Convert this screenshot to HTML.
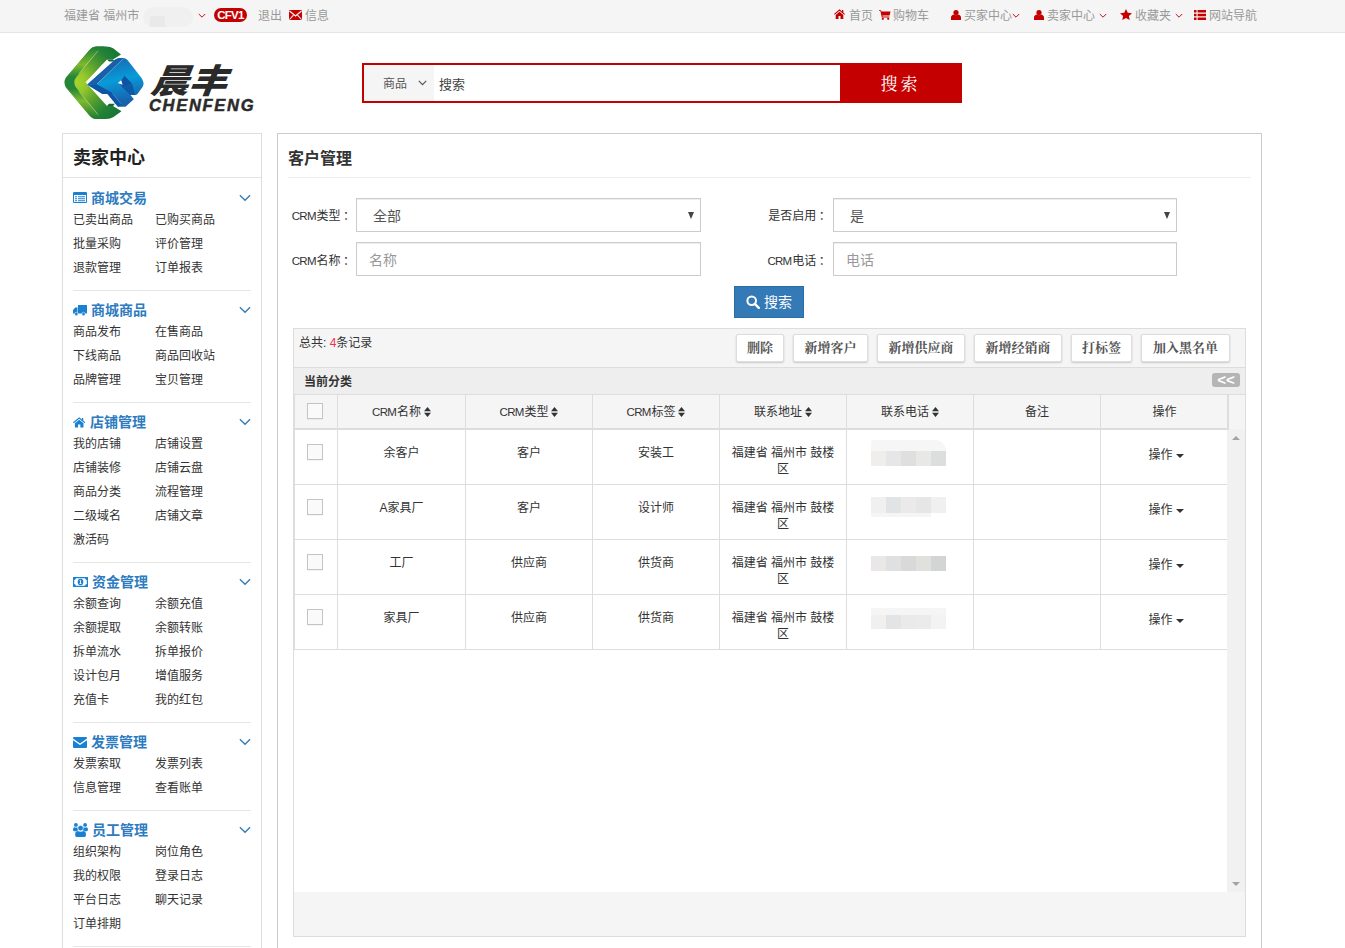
<!DOCTYPE html>
<html lang="zh-CN">
<head>
<meta charset="utf-8">
<title>客户管理</title>
<style>
*{box-sizing:border-box;margin:0;padding:0}
html,body{width:1345px;height:948px;overflow:hidden;background:#fff}
body{font-family:"Liberation Sans","Noto Sans CJK SC",sans-serif;font-size:12px;color:#333;position:relative}
a{color:inherit;text-decoration:none}
ul{list-style:none}
/* top bar */
#topbar{position:absolute;left:0;top:0;width:1345px;height:33px;background:#f5f5f5;border-bottom:1px solid #e5e5e5;color:#999;font-size:12px;line-height:32px}
#topbar .t{position:absolute;top:0;white-space:nowrap}
#topbar svg{position:absolute}
.badge{position:absolute;left:214px;top:8px;width:33px;height:14px;border-radius:7px;background:#c40000;color:#fff;font-size:11.5px;font-weight:bold;line-height:14.5px;text-align:center;letter-spacing:-0.7px}
.blur1{position:absolute;left:143px;top:7px;width:50px;height:20px;border-radius:10px;background:#f0f0f0}
.blur1:after{content:'';position:absolute;left:7px;top:9px;width:15px;height:11px;background:#e9e9e9}
/* logo */
#logo{position:absolute;left:62px;top:44px;width:195px;height:78px}
/* search */
#search{position:absolute;left:362px;top:63px;width:600px;height:40px;border:2px solid #c40000;background:#fff}
#search .cat{position:absolute;left:0;top:0;width:70px;height:36px;background:#f5f5f5;color:#555;font-size:12px;line-height:39px;padding-left:19px}
#search .kw{position:absolute;left:75px;top:0;line-height:40px;font-size:13px;color:#444}
#search .btn{position:absolute;left:476px;top:-2px;width:122px;height:40px;background:#c40000;color:#fff;font-size:17px;line-height:44px;text-align:center;letter-spacing:3px;padding-right:1px;font-family:"Liberation Serif","Noto Serif CJK SC",serif}
/* sidebar */
#side{position:absolute;left:62px;top:133px;width:200px;height:830px;border:1px solid #ddd;background:#fff}
#side h2{height:44px;line-height:49px;padding-left:10px;font-size:18px;font-weight:bold;color:#222;border-bottom:1px solid #e4e4e4}
.sec{position:relative;margin:0 10px;border-top:1px solid #e7e7e7;padding-top:8px;padding-bottom:10px}
.sec.first{border-top:0;padding-top:9px;margin-top:0}
.sec h3{height:21px;line-height:23px;font-size:14px;font-weight:bold;color:#2d7bc0;padding-left:19px;position:relative}
.sec h3 svg.ic{position:absolute;left:0;top:5px}
.sec h3 svg.chev{position:absolute;right:0;top:7px}
.sec ul{display:block;overflow:hidden}
.sec li{float:left;width:82px;height:24px;line-height:24px;font-size:12px;color:#333;white-space:nowrap}
/* main */
#main{position:absolute;left:277px;top:133px;width:985px;height:830px;border:1px solid #ccc;background:#fff}
#main h1{position:absolute;left:10px;top:10px;width:963px;height:34px;line-height:30px;font-size:16px;font-weight:bold;color:#333;border-bottom:1px solid #eee}
.lbl{position:absolute;font-size:12px;color:#333;line-height:34px;text-align:right;white-space:nowrap}
.la{font-size:11.5px;letter-spacing:-0.7px;margin-right:0.7px}
.co{font-style:normal;margin-left:2.5px}
.fld{position:absolute;width:345px;height:34px;border:1px solid #ccc;background:#fff;font-size:14px;line-height:32px;padding-top:1px;color:#555;box-shadow:inset 0 1px 1px rgba(0,0,0,.075)}
.fld.ph{color:#999;padding-left:12px}
.fld.sel{padding-left:16px}
.fld .arr{position:absolute;right:6px;top:13px;width:0;height:0;border-left:3.5px solid transparent;border-right:3.5px solid transparent;border-top:7px solid #444}
#sbtn{position:absolute;left:456px;top:152px;width:70px;height:32px;background:#337ab7;border:1px solid #2e6da4;color:#fff;font-size:14px;line-height:30px;white-space:nowrap}
#sbtn svg{position:absolute;left:11px;top:8px}
#sbtn span{position:absolute;left:29px;top:0}
/* grid */
#grid{position:absolute;left:15px;top:194px;width:953px;height:609px;border:1px solid #ddd;background:#f5f5f5}
#tb{position:absolute;left:0;top:0;width:951px;height:39px;border-bottom:1px solid #ddd}
#tb .tot{position:absolute;left:5px;top:5px;line-height:18px;font-size:12px;color:#333}
#tb .tot b{color:#f4304a;font-weight:normal}
.gb{position:absolute;top:5px;height:28px;border:1px solid #ddd;border-radius:2px;background:#fff;color:#555;font-size:13px;font-weight:bold;line-height:26px;text-align:center;font-family:"Liberation Serif","Noto Serif CJK SC",serif;white-space:nowrap;box-shadow:0 1px 2px rgba(0,0,0,.18)}
#cat{position:absolute;left:0;top:39px;width:951px;height:27px;background:#eee;font-weight:bold;font-size:12px;line-height:28px;padding-left:10px;color:#333}
#cat .cl{position:absolute;left:918px;top:5px;width:28px;height:14px;border-radius:3px;background:#b5b5b5;color:#fff;font-size:15px;line-height:13px;text-align:center;font-weight:bold;letter-spacing:0}
table{border-collapse:collapse;table-layout:fixed;position:absolute;left:0}
td,th{border:1px solid #ddd;text-align:center;font-weight:normal;font-size:12px;color:#333;vertical-align:top}
#hd{top:65px;width:934px}
#hd th{height:35px;line-height:34px;background:#f5f5f5;border-bottom:2px solid #ddd;vertical-align:middle}
#bodywrap{position:absolute;left:0;top:101px;width:933px;height:462px;background:#fff;overflow:hidden}
#bd{top:-1px;width:934px}
#bd td{height:55px;padding:15px 8px 0;line-height:16px}
.cb{display:inline-block;width:16px;height:16px;border:1px solid #c4c4c4;background:#fafafa;border-radius:0;box-shadow:0 1px 1px rgba(0,0,0,.04);vertical-align:top}
th .cb{margin-top:8px;margin-left:-3px;background:#fafafa}
td .cb{margin-top:-1px;margin-left:-3px}
.sort{display:inline-block;vertical-align:middle;margin-left:3px;margin-top:-2px}
.op{display:inline-block;padding-top:2px;padding-left:3px}
.car{display:inline-block;width:0;height:0;border-left:4px solid transparent;border-right:4px solid transparent;border-top:4px solid #333;margin-left:3px;vertical-align:middle}
.pc{position:relative}
.bl{position:absolute;left:24px;width:75px;display:block}
.ph1{display:inline-block;width:75px;height:24px;margin-top:-8px;background:linear-gradient(90deg,#efeeee 0 20%,#e6e6e8 20% 40%,#e0e0e0 40% 60%,#e8e8e6 60% 80%,#dedfdf 80%)}
#sb{position:absolute;left:933px;top:100px;width:18px;height:463px;background:#f1f1f1}
#sb i{position:absolute;left:5px;width:0;height:0;border-left:4px solid transparent;border-right:4px solid transparent}
#sb i.up{top:7px;border-bottom:4px solid #a3a3a3}
#sb i.dn{bottom:6px;border-top:4px solid #a3a3a3}
#hdsb{position:absolute;left:934px;top:66px;width:17px;height:35px;background:#f5f5f5}
</style>
</head>
<body>
<div id="topbar">
<span class="t" style="left:64px">福建省 福州市</span>
<span class="blur1"></span>
<svg style="left:198px;top:13px" width="8" height="6" viewBox="0 0 8 6"><path d="M0.8 1 L4 4.2 L7.2 1" fill="none" stroke="#c40000" stroke-width="0.95"/></svg>
<span class="badge">CFV1</span>
<span class="t" style="left:258px">退出</span>
<svg style="left:289px;top:10px" width="13" height="10" viewBox="0 0 13 10"><rect x="0" y="0" width="13" height="10" rx="1" fill="#c40000"/><path d="M0.5 1 L6.5 6 L12.5 1" fill="none" stroke="#f5f5f5" stroke-width="1.3"/><path d="M0.5 9.5 L4.5 5.2 M12.5 9.5 L8.5 5.2" fill="none" stroke="#f5f5f5" stroke-width="1.1"/></svg>
<span class="t" style="left:305px">信息</span>
<svg style="left:834px;top:9px" width="11" height="10" viewBox="0 0 11 10"><path d="M5.5 0.2 L0 5 L0.7 5.8 L5.5 1.8 L10.3 5.8 L11 5 L9.3 3.5 V1 H8 V2.4 Z" fill="#c40000"/><path d="M5.5 2.8 L1.7 6 V10 H4.5 V7 H6.5 V10 H9.3 V6 Z" fill="#c40000"/></svg>
<span class="t" style="left:849px">首页</span>
<svg style="left:879px;top:10px" width="12" height="10" viewBox="0 0 12 10"><path d="M0 0.3 H2 L2.4 1.4 H11.5 L10.6 5.6 H3.4 L3.6 6.6 H10.4 V7.4 H2.8 L1.4 1.1 H0 Z" fill="#c40000"/><circle cx="3.8" cy="8.8" r="1.1" fill="#c40000"/><circle cx="9.2" cy="8.8" r="1.1" fill="#c40000"/></svg>
<span class="t" style="left:893px">购物车</span>
<svg style="left:951px;top:10px" width="10" height="10" viewBox="0 0 10 10"><circle cx="5" cy="2.6" r="2.6" fill="#c40000"/><path d="M0 10 V7.5 C0 5.5 1.5 4.6 3 4.4 C4 5.4 6 5.4 7 4.4 C8.5 4.6 10 5.5 10 7.5 V10 Z" fill="#c40000"/></svg>
<span class="t" style="left:964px">买家中心</span>
<svg style="left:1012px;top:13px" width="8" height="6" viewBox="0 0 8 6"><path d="M0.8 1 L4 4.2 L7.2 1" fill="none" stroke="#c40000" stroke-width="0.95"/></svg>
<svg style="left:1034px;top:10px" width="10" height="10" viewBox="0 0 10 10"><circle cx="5" cy="2.6" r="2.6" fill="#c40000"/><path d="M0 10 V7.5 C0 5.5 1.5 4.6 3 4.4 C4 5.4 6 5.4 7 4.4 C8.5 4.6 10 5.5 10 7.5 V10 Z" fill="#c40000"/></svg>
<span class="t" style="left:1047px">卖家中心</span>
<svg style="left:1099px;top:13px" width="8" height="6" viewBox="0 0 8 6"><path d="M0.8 1 L4 4.2 L7.2 1" fill="none" stroke="#c40000" stroke-width="0.95"/></svg>
<svg style="left:1120px;top:9px" width="12" height="11" viewBox="0 0 12 11"><path d="M6 0 L7.8 3.8 L12 4.3 L8.9 7.1 L9.7 11 L6 9 L2.3 11 L3.1 7.1 L0 4.3 L4.2 3.8 Z" fill="#c40000"/></svg>
<span class="t" style="left:1135px">收藏夹</span>
<svg style="left:1175px;top:13px" width="8" height="6" viewBox="0 0 8 6"><path d="M0.8 1 L4 4.2 L7.2 1" fill="none" stroke="#c40000" stroke-width="0.95"/></svg>
<svg style="left:1194px;top:10px" width="12" height="10" viewBox="0 0 12 10"><path d="M0 0 H2.5 V2.4 H0 Z M3.6 0 H12 V2.4 H3.6 Z M0 3.8 H2.5 V6.2 H0 Z M3.6 3.8 H12 V6.2 H3.6 Z M0 7.6 H2.5 V10 H0 Z M3.6 7.6 H12 V10 H3.6 Z" fill="#c40000"/></svg>
<span class="t" style="left:1209px">网站导航</span>
</div>
<div id="logo">
<svg style="position:absolute;left:-7px;top:-4px" width="100" height="85" viewBox="0 0 100 85">
<defs>
<radialGradient id="g1" gradientUnits="userSpaceOnUse" cx="21" cy="42.3" r="50"><stop offset="0" stop-color="#a8d52a"/><stop offset="0.22" stop-color="#93c72b"/><stop offset="0.5" stop-color="#579f2f"/><stop offset="0.8" stop-color="#228235"/><stop offset="1" stop-color="#187835"/></radialGradient>
<linearGradient id="g2" x1="0" y1="0" x2="0" y2="1"><stop offset="0" stop-color="#1a7b35"/><stop offset="0.25" stop-color="#7fba2c"/><stop offset="0.42" stop-color="#23863a"/><stop offset="0.58" stop-color="#23863a"/><stop offset="0.75" stop-color="#7fba2c"/><stop offset="1" stop-color="#1a7b35"/></linearGradient>
<linearGradient id="g3" x1="0" y1="0" x2="0.25" y2="1"><stop offset="0" stop-color="#1b62aa"/><stop offset="0.25" stop-color="#1279c0"/><stop offset="0.55" stop-color="#089bd8"/><stop offset="0.8" stop-color="#1279c0"/><stop offset="1" stop-color="#1762ab"/></linearGradient>
</defs>
<path d="M66 14.5 L58.5 8.5 Q55.5 6.6 51 6.6 L42 6.6 Q37.5 6.6 34.5 10 L11 37.5 Q8 42.3 11 47.5 L34.5 75.5 Q37.5 79 42 79 L51 79 Q55.5 79 58.5 77 L66.5 71.2 L58 66 L52 66 L30.6 42.3 L52 19.4 L58 19.4 Z" fill="url(#g1)"/>
<path d="M50 6.6 L42 6.6 Q37.5 6.6 34.5 10 L11 37.5 Q8 42.3 11 47.5 L34.5 75.5 Q37.5 79 42 79 L50 79 Q46 78 43.5 75 L21 47.5 Q17.5 42.3 21 37.5 L43.5 10.5 Q46 7.5 50 6.6 Z" fill="url(#g2)"/>
<path d="M43 11 L24 33.5 M24 51.5 L43 74.5" fill="none" stroke="#fff" stroke-width="0.5" opacity="0.75"/>
<path d="M52 19.4 L58 19.4 L60 21.5 L54 21.5 Z M52 66 L58 66 L60 63.8 L54 63.8 Z" fill="#15683a"/>
<path d="M32.3 44.6 L60 19.8 Q62.5 17.9 65 17.9 L68 17.9 Q70.5 17.9 72.5 20 L86.5 38 Q90 43 87.5 47 L82.5 54 Q81.5 55 80 55 L75.5 55 L78.8 59.3 L70.5 66.8 L63 66.8 L52.5 54 L47.5 54 Z" fill="url(#g3)"/>
<path d="M32.3 44.6 L60 19.8 Q62.5 17.9 65 17.9 L69 17.9 L41.5 44.3 Z" fill="#1b5fa8"/>
<path d="M32.3 44.7 L41.5 44.3 L57 52.8 L66.5 64.5 L63 66.8 L52.5 54 L47.5 54 Z" fill="#0e55a3"/>
<path d="M68.5 18.6 L42 44" fill="none" stroke="#fff" stroke-width="0.5" opacity="0.6"/>
<path d="M57.5 53.5 L66 63.8" fill="none" stroke="#fff" stroke-width="0.45" opacity="0.5"/>
<path d="M64.5 43 L69.5 35.8 L77 43.5 L68 48 Z" fill="#0d55a4"/>
<path d="M62.8 43 L66.2 40.2 L67.6 44.8 Z" fill="#fff"/>
<path d="M68 48 L77 43.5 L80.2 55 L75.5 55 Z" fill="#0d55a4" opacity="0.9"/>
<path d="M36.5 37 L47.5 24.5 L53 22 L38.5 38.5 Z M46 57.5 L52 57.5 L56.5 62.5 L50 62.5 Z" fill="#fff"/>
</svg>
<span style="position:absolute;left:89px;top:15.5px;font-size:33.5px;line-height:44px;font-weight:900;font-style:italic;color:#2b2a2a;letter-spacing:0;font-family:'Liberation Sans','Noto Sans CJK SC',sans-serif;transform:scaleX(1.14) skewX(-6deg);transform-origin:0 50%;white-space:nowrap">晨丰</span>
<span style="position:absolute;left:87px;top:51px;font-size:16.5px;line-height:20px;font-weight:bold;font-style:italic;color:#2b2a2a;letter-spacing:1.7px;-webkit-text-stroke:0.5px #2b2a2a;white-space:nowrap">CHENFENG</span>
</div>
<div id="search">
<div class="cat">商品<svg style="position:absolute;left:54px;top:15px" width="9" height="6" viewBox="0 0 9 6"><path d="M0.8 0.8 L4.5 4.6 L8.2 0.8" fill="none" stroke="#555" stroke-width="1.2"/></svg></div>
<div class="kw">搜索</div>
<div class="btn">搜索</div>
</div>
<div id="side">
<h2>卖家中心</h2>
<div class="sec first"><h3 style="padding-left:18px"><svg class="ic" width="14" height="11" viewBox="0 0 14 11"><path d="M1.2 0 H12.8 Q14 0 14 1.2 V9.8 Q14 11 12.8 11 H1.2 Q0 11 0 9.8 V1.2 Q0 0 1.2 0 Z M1 3 V10 H13 V3 Z" fill="#1a80d2" fill-rule="evenodd"/><path d="M2 4.2 H4 V5.2 H2 Z M5 4.2 H12 V5.2 H5 Z M2 6.2 H4 V7.2 H2 Z M5 6.2 H12 V7.2 H5 Z M2 8.2 H4 V9.2 H2 Z M5 8.2 H12 V9.2 H5 Z" fill="#1a80d2"/></svg>商城交易<svg class="chev" width="12" height="8" viewBox="0 0 12 8"><path d="M0.9 1.2 L6 6.3 L11.1 1.2" fill="none" stroke="#337ab7" stroke-width="1.3"/></svg></h3><ul><li>已卖出商品</li><li>已购买商品</li><li>批量采购</li><li>评价管理</li><li>退款管理</li><li>订单报表</li></ul></div>
<div class="sec"><h3 style="padding-left:18px"><svg class="ic" width="14" height="11" viewBox="0 0 14 11" style="top:6px"><path d="M5 0 H14 V8.5 H5 Z M0 8.5 V5 L2.2 2.5 H4.5 V8.5 Z" fill="#1a80d2"/><circle cx="3.3" cy="9" r="1.7" fill="#1a80d2" stroke="#fff" stroke-width="0.5"/><circle cx="10.5" cy="9" r="1.7" fill="#1a80d2" stroke="#fff" stroke-width="0.5"/></svg>商城商品<svg class="chev" width="12" height="8" viewBox="0 0 12 8"><path d="M0.9 1.2 L6 6.3 L11.1 1.2" fill="none" stroke="#337ab7" stroke-width="1.3"/></svg></h3><ul><li>商品发布</li><li>在售商品</li><li>下线商品</li><li>商品回收站</li><li>品牌管理</li><li>宝贝管理</li></ul></div>
<div class="sec"><h3 style="padding-left:17px"><svg class="ic" width="12.4" height="10.5" viewBox="0 0 13 11" preserveAspectRatio="none" style="top:6px"><path d="M6.5 0.2 L0 5.6 L0.8 6.5 L6.5 1.9 L12.2 6.5 L13 5.6 L10.8 3.8 V1 H9.3 V2.5 Z" fill="#1a80d2"/><path d="M6.5 3 L2 6.6 V11 H5.3 V7.8 H7.7 V11 H11 V6.6 Z" fill="#1a80d2"/></svg>店铺管理<svg class="chev" width="12" height="8" viewBox="0 0 12 8"><path d="M0.9 1.2 L6 6.3 L11.1 1.2" fill="none" stroke="#337ab7" stroke-width="1.3"/></svg></h3><ul><li>我的店铺</li><li>店铺设置</li><li>店铺装修</li><li>店铺云盘</li><li>商品分类</li><li>流程管理</li><li>二级域名</li><li>店铺文章</li><li>激活码</li></ul></div>
<div class="sec"><h3 style="padding-left:19px"><svg class="ic" width="15" height="10" viewBox="0 0 15 10" style="top:6px"><path d="M0 0 H15 V10 H0 Z M3 1.2 Q2.6 2.8 1.2 3 V7 Q2.6 7.2 3 8.8 H12 Q12.4 7.2 13.8 7 V3 Q12.4 2.8 12 1.2 Z" fill="#1a80d2" fill-rule="evenodd"/><ellipse cx="7.5" cy="5" rx="2.8" ry="3.2" fill="#1a80d2"/><path d="M7.1 3.2 H8 V6.3 H8.6 V7 H6.5 V6.3 H7.1 V4.1 H6.5 V3.6 Z" fill="#fff"/></svg>资金管理<svg class="chev" width="12" height="8" viewBox="0 0 12 8"><path d="M0.9 1.2 L6 6.3 L11.1 1.2" fill="none" stroke="#337ab7" stroke-width="1.3"/></svg></h3><ul><li>余额查询</li><li>余额充值</li><li>余额提取</li><li>余额转账</li><li>拆单流水</li><li>拆单报价</li><li>设计包月</li><li>增值服务</li><li>充值卡</li><li>我的红包</li></ul></div>
<div class="sec"><h3 style="padding-left:18px"><svg class="ic" width="14" height="11" viewBox="0 0 14 11" style="top:6px"><path d="M0 1 Q0 0 1 0 H13 Q14 0 14 1 V1.6 L7 6.4 L0 1.6 Z M0 3.2 L7 8 L14 3.2 V10 Q14 11 13 11 H1 Q0 11 0 10 Z" fill="#1a80d2"/></svg>发票管理<svg class="chev" width="12" height="8" viewBox="0 0 12 8"><path d="M0.9 1.2 L6 6.3 L11.1 1.2" fill="none" stroke="#337ab7" stroke-width="1.3"/></svg></h3><ul><li>发票索取</li><li>发票列表</li><li>信息管理</li><li>查看账单</li></ul></div>
<div class="sec"><h3 style="padding-left:19px"><svg class="ic" width="15" height="14" viewBox="0 0 15 14" style="top:4px"><circle cx="7.6" cy="5.1" r="2.7" fill="#1a80d2" stroke="#fff" stroke-width="0.5"/><path d="M2.2 12.6 V10.5 Q2.2 8.3 4.6 8 Q7.6 9.6 10.6 8 Q12.9 8.3 12.9 10.5 V12.6 Q12.9 14 11.5 14 H3.6 Q2.2 14 2.2 12.6 Z" fill="#1a80d2"/><circle cx="2.9" cy="1.9" r="1.9" fill="#1a80d2"/><circle cx="12.1" cy="1.9" r="1.9" fill="#1a80d2"/><path d="M0 6.6 Q0 4.4 1.4 4.2 Q3 5 4.4 4.3 Q4.3 6.4 5.2 7.4 Q3.5 7.5 3 8.2 H1.4 Q0 8.2 0 6.6 Z M15 6.6 Q15 4.4 13.6 4.2 Q12 5 10.6 4.3 Q10.7 6.4 9.8 7.4 Q11.5 7.5 12 8.2 H13.6 Q15 8.2 15 6.6 Z" fill="#1a80d2"/></svg>员工管理<svg class="chev" width="12" height="8" viewBox="0 0 12 8"><path d="M0.9 1.2 L6 6.3 L11.1 1.2" fill="none" stroke="#337ab7" stroke-width="1.3"/></svg></h3><ul><li>组织架构</li><li>岗位角色</li><li>我的权限</li><li>登录日志</li><li>平台日志</li><li>聊天记录</li><li>订单排期</li></ul></div>
<div class="sec"></div>
</div>
<div id="main">
<h1>客户管理</h1>
<span class="lbl" style="left:0;width:77px;top:65px"><span class="la">CRM</span>类型<i class="co">：</i></span>
<div class="fld sel" style="left:78px;top:64px">全部<i class="arr"></i></div>
<span class="lbl" style="left:0;width:77px;top:110px"><span class="la">CRM</span>名称<i class="co">：</i></span>
<div class="fld ph" style="left:78px;top:108px">名称</div>
<span class="lbl" style="left:470px;width:82.7px;top:65px">是否启用<i class="co">：</i></span>
<div class="fld sel" style="left:555px;top:64px;width:344px">是<i class="arr"></i></div>
<span class="lbl" style="left:470px;width:82.7px;top:110px"><span class="la">CRM</span>电话<i class="co">：</i></span>
<div class="fld ph" style="left:555px;top:108px;width:344px">电话</div>
<div id="sbtn"><svg width="14" height="14" viewBox="0 0 14 14"><circle cx="5.7" cy="5.7" r="4.3" fill="none" stroke="#fff" stroke-width="2"/><path d="M8.8 8.8 L12.8 12.8" stroke="#fff" stroke-width="2.4" stroke-linecap="round"/></svg><span>搜索</span></div>
<div id="grid">
<div id="tb"><span class="tot">总共: <b>4</b>条记录</span>
<span class="gb" style="left:442px;width:48px">删除</span>
<span class="gb" style="left:499px;width:75px">新增客户</span>
<span class="gb" style="left:583px;width:88px">新增供应商</span>
<span class="gb" style="left:680px;width:88px">新增经销商</span>
<span class="gb" style="left:777px;width:61px">打标签</span>
<span class="gb" style="left:847px;width:89px">加入黑名单</span>
</div>
<div id="cat">当前分类<span class="cl">&lt;&lt;</span></div>
<div id="hdsb"></div>
<div style="position:absolute;left:0;top:65px;width:951px;height:1px;background:#ddd"></div>
<div style="position:absolute;left:933px;top:65px;width:2px;height:35px;background:#ddd;z-index:3"></div>
<table id="hd"><colgroup><col style="width:43px"><col style="width:128px"><col style="width:127px"><col style="width:127px"><col style="width:127px"><col style="width:127px"><col style="width:127px"><col style="width:128px"></colgroup><tr><th><span class="cb"></span></th><th><span class="la">CRM</span>名称<svg class="sort" width="7" height="10" viewBox="0 0 7 10"><path d="M3.5 0 L7 4.2 H0 Z M0 5.8 H7 L3.5 10 Z" fill="#333"/></svg></th><th><span class="la">CRM</span>类型<svg class="sort" width="7" height="10" viewBox="0 0 7 10"><path d="M3.5 0 L7 4.2 H0 Z M0 5.8 H7 L3.5 10 Z" fill="#333"/></svg></th><th><span class="la">CRM</span>标签<svg class="sort" width="7" height="10" viewBox="0 0 7 10"><path d="M3.5 0 L7 4.2 H0 Z M0 5.8 H7 L3.5 10 Z" fill="#333"/></svg></th><th>联系地址<svg class="sort" width="7" height="10" viewBox="0 0 7 10"><path d="M3.5 0 L7 4.2 H0 Z M0 5.8 H7 L3.5 10 Z" fill="#333"/></svg></th><th>联系电话<svg class="sort" width="7" height="10" viewBox="0 0 7 10"><path d="M3.5 0 L7 4.2 H0 Z M0 5.8 H7 L3.5 10 Z" fill="#333"/></svg></th><th>备注</th><th>操作</th></tr></table>
<div style="position:absolute;left:0;top:99px;width:935px;height:2px;background:#ddd;z-index:3"></div>
<div id="bodywrap"><table id="bd"><colgroup><col style="width:43px"><col style="width:128px"><col style="width:127px"><col style="width:127px"><col style="width:127px"><col style="width:127px"><col style="width:127px"><col style="width:128px"></colgroup><tr><td><span class="cb"></span></td><td>余客户</td><td>客户</td><td>安装工</td><td>福建省 福州市 鼓楼区</td><td class="pc"><i class="bl" style="top:10px;height:11px;background:#f6f6f6;border-radius:8px 30px 0 0"></i><i class="bl" style="top:21px;height:15px;background:linear-gradient(90deg,#efeeed 0 20%,#e6e6e8 20% 40%,#dfdfdf 40% 60%,#e8e8e6 60% 80%,#dcdddd 80%)"></i></td><td></td><td><span class="op">操作<i class="car"></i></span></td></tr><tr><td><span class="cb"></span></td><td>A家具厂</td><td>客户</td><td>设计师</td><td>福建省 福州市 鼓楼区</td><td class="pc"><i class="bl" style="top:12px;height:16px;background:linear-gradient(90deg,#f1f0f0 0 20%,#e2e3e5 20% 40%,#ebeaea 40% 60%,#e6e6e6 60% 80%,#f0f0f0 80%)"></i><i class="bl" style="top:28px;height:4px;width:60px;background:#f5f5f5"></i></td><td></td><td><span class="op">操作<i class="car"></i></span></td></tr><tr><td><span class="cb"></span></td><td>工厂</td><td>供应商</td><td>供货商</td><td>福建省 福州市 鼓楼区</td><td class="pc"><i class="bl" style="top:16px;height:15px;background:linear-gradient(90deg,#e9e8e6 0 20%,#dfe0e2 20% 40%,#d9d9d9 40% 60%,#e0e1dc 60% 80%,#d3d5d5 80%)"></i></td><td></td><td><span class="op">操作<i class="car"></i></span></td></tr><tr><td><span class="cb"></span></td><td>家具厂</td><td>供应商</td><td>供货商</td><td>福建省 福州市 鼓楼区</td><td class="pc"><i class="bl" style="top:13px;height:7px;background:#f5f5f5"></i><i class="bl" style="top:20px;height:14px;background:linear-gradient(90deg,#f1f0ef 0 20%,#e3e4e6 20% 40%,#ebeaea 40% 60%,#ecebeb 60% 80%,#f3f3f3 80%)"></i></td><td></td><td><span class="op">操作<i class="car"></i></span></td></tr></table></div>
<div id="sb"><i class="up"></i><i class="dn"></i></div>
</div>
</div>
</body>
</html>
